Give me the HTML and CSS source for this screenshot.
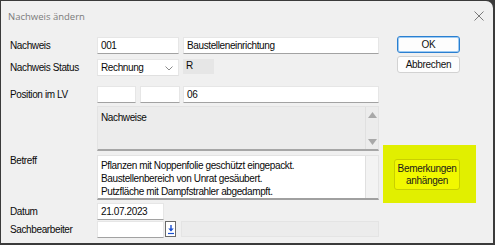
FILE: index.html
```html
<!DOCTYPE html>
<html lang="de">
<head>
<meta charset="utf-8">
<title>Nachweis ändern</title>
<link rel="stylesheet" href="styles.css">
</head>
<body>
<div class="window">
  <div class="titlebar">
    <span class="title">Nachweis ändern</span>
    <svg class="close" width="10" height="10" viewBox="0 0 10 10"><path d="M0.5 0.5 L9.5 9.5 M9.5 0.5 L0.5 9.5" stroke="#7a7a7a" stroke-width="1" fill="none"/></svg>
  </div>
  <div class="content">
    <div class="form">
      <div class="row r1">
        <span class="label">Nachweis</span>
        <div class="field w82">001</div>
        <div class="field w195 ml4">Baustelleneinrichtung</div>
      </div>
      <div class="row r2">
        <span class="label">Nachweis Status</span>
        <div class="field select w82">Rechnung
          <svg class="chev" width="8" height="5" viewBox="0 0 8 5"><path d="M0.5 0.5 L4 4 L7.5 0.5" stroke="#8a8a8a" fill="none"/></svg>
        </div>
        <div class="readonly ml4">R</div>
      </div>
      <div class="row r3">
        <span class="label">Position im LV</span>
        <div class="field w39"></div>
        <div class="field w40 ml4"></div>
        <div class="field w195 ml3">06</div>
      </div>
      <div class="row r4">
        <span class="label"></span>
        <div class="memo gray">
          <div class="memo-text">Nachweise</div>
          <div class="scroll">
            <svg width="9" height="6" viewBox="0 0 9 6"><path d="M0 6 L4.5 0 L9 6 Z" fill="#a8a8a8"/></svg>
            <svg width="9" height="6" viewBox="0 0 9 6"><path d="M0 0 L4.5 6 L9 0 Z" fill="#a8a8a8"/></svg>
          </div>
        </div>
      </div>
      <div class="row r5">
        <span class="label top">Betreff</span>
        <div class="memo white">
          <div class="memo-text">Pflanzen mit Noppenfolie geschützt eingepackt.<br>Baustellenbereich von Unrat gesäubert.<br>Putzfläche mit Dampfstrahler abgedampft.</div>
          <div class="scroll light"></div>
        </div>
      </div>
      <div class="row r6">
        <span class="label">Datum</span>
        <div class="field w66">21.07.2023</div>
      </div>
      <div class="row r7">
        <span class="label">Sachbearbeiter</span>
        <div class="field w66"></div>
        <div class="pick">
          <svg width="8" height="11" viewBox="0 0 8 11"><path d="M4 1 L4 6.5" stroke="#1a4fd0" stroke-width="1.4"/><path d="M1.2 4.5 L4 7.6 L6.8 4.5 Z" fill="#1a4fd0"/><path d="M1 9.5 L7 9.5" stroke="#1a4fd0" stroke-width="1.2"/></svg>
        </div>
        <div class="disabled"></div>
      </div>
    </div>
    <div class="side">
      <button class="btn ok">OK</button>
      <button class="btn cancel">Abbrechen</button>
      <div class="highlight">
        <button class="btn remark">Bemerkungen<br>anhängen</button>
      </div>
    </div>
  </div>
</div>
</body>
</html>
```

FILE: styles.css
```css
* { box-sizing: border-box; }
html, body { margin: 0; padding: 0; }
body {
  width: 495px;
  height: 245px;
  background: #3b3b3b;
  padding: 1px 0 0 1px;
  font-family: "Liberation Sans", Arial, sans-serif;
  font-size: 10px;
  letter-spacing: -0.38px;
  color: #0a0a0a;
  overflow: hidden;
}
.window {
  width: 492px;
  height: 242px;
  background: #f0f0f0;
  border-top-right-radius: 7px;
  display: flex;
  flex-direction: column;
}
.titlebar {
  height: 28px;
  display: flex;
  align-items: center;
  justify-content: space-between;
  padding: 0 9px 0 7px;
}
.title {
  font-family: "Open Sans", "Noto Sans", sans-serif;
  font-size: 9.5px;
  letter-spacing: 0;
  color: #7b7b7b;
  margin-top: 2px;
}
.close { margin-top: 1px; }
.content {
  display: flex;
  padding-left: 9px;
}
.form {
  padding-top: 8px;
  display: flex;
  flex-direction: column;
}
.row {
  display: flex;
  align-items: center;
}
.label {
  width: 87px;
  flex: none;
  white-space: nowrap;
}
.label.top { align-self: flex-start; margin-top: 0; }
.r1 { height: 17px; }
.r2 { height: 17px; margin-top: 5px; }
.r3 { height: 17px; margin-top: 10px; }
.r4 { height: 45px; margin-top: 3px; }
.r5 { height: 45px; margin-top: 4px; }
.r6 { height: 17px; margin-top: 3px; }
.r7 { height: 17px; margin-top: 1px; }
.field {
  height: 17px;
  background: #fff;
  border: 1px solid #e6e6e6;
  border-bottom-color: #a2a2a2;
  padding: 0 3px;
  line-height: 15px;
  white-space: nowrap;
  flex: none;
}
.select {
  display: flex;
  align-items: center;
  justify-content: space-between;
  padding-right: 5px;
  border-bottom-color: #e0e0e0;
}
.chev { margin-top: 2px; }
.readonly {
  width: 31px;
  height: 15px;
  background: #e6e6e6;
  padding: 0 3px;
  line-height: 14px;
  align-self: flex-start;
}
.w82 { width: 82px; }
.w195 { width: 196px; }
.w39 { width: 39px; }
.w40 { width: 40px; }
.w66 { width: 67px; }
.ml4 { margin-left: 4px; }
.ml3 { margin-left: 3px; }
.memo {
  width: 282px;
  height: 45px;
  display: flex;
  border: 1px solid #e3e3e3;
  border-bottom: 2px solid #a6a6a6;
}
.memo.gray { background: #ececec; }
.memo.white { background: #fff; border-bottom-color: #a0a0a0; }
.memo-text {
  flex: 1;
  padding: 3px 3px 0 3px;
  line-height: 13px;
}
.memo.gray .memo-text { padding-top: 4px; }
.scroll {
  width: 13px;
  border-left: 1px solid #e0e0e0;
  display: flex;
  flex-direction: column;
  justify-content: space-between;
  align-items: center;
  padding: 5px 0 4px;
}
.scroll.light { background: #f3f3f3; }
.pick {
  width: 11px;
  height: 16px;
  margin-left: 1px;
  background: #fff;
  border: 1px solid #6a6a6a;
  display: flex;
  align-items: center;
  justify-content: center;
  align-self: flex-start;
}
.disabled {
  width: 198px;
  height: 16px;
  margin-left: 5px;
  background: #ececec;
  border: 1px solid #e4e4e4;
  align-self: flex-start;
}
.side {
  display: flex;
  flex-direction: column;
  margin-left: 4px;
  width: 93px;
}
.btn {
  font-family: "Liberation Sans", Arial, sans-serif;
  font-size: 10px;
  letter-spacing: -0.3px;
  color: #111;
  background: #fdfdfd;
  border: 1px solid #d2d2d2;
  border-radius: 3px;
  padding: 0;
  margin: 0;
}
.ok {
  width: 63px;
  height: 17px;
  margin: 7px 0 0 14px;
  border: 1px solid #2a7fd0;
  box-shadow: inset 0 0 0 1px #9ccaf3;
}
.cancel {
  width: 63px;
  height: 17px;
  margin: 3px 0 0 14px;
}
.highlight {
  margin-top: 72px;
  width: 93px;
  height: 58px;
  background: #e1ef00;
  padding: 14px 0 0 11px;
}
.remark {
  width: 66px;
  height: 31px;
  background: #f1f800;
  border: 1px solid #c9cf00;
  line-height: 12px;
  color: #1a1a1a;
}
```
